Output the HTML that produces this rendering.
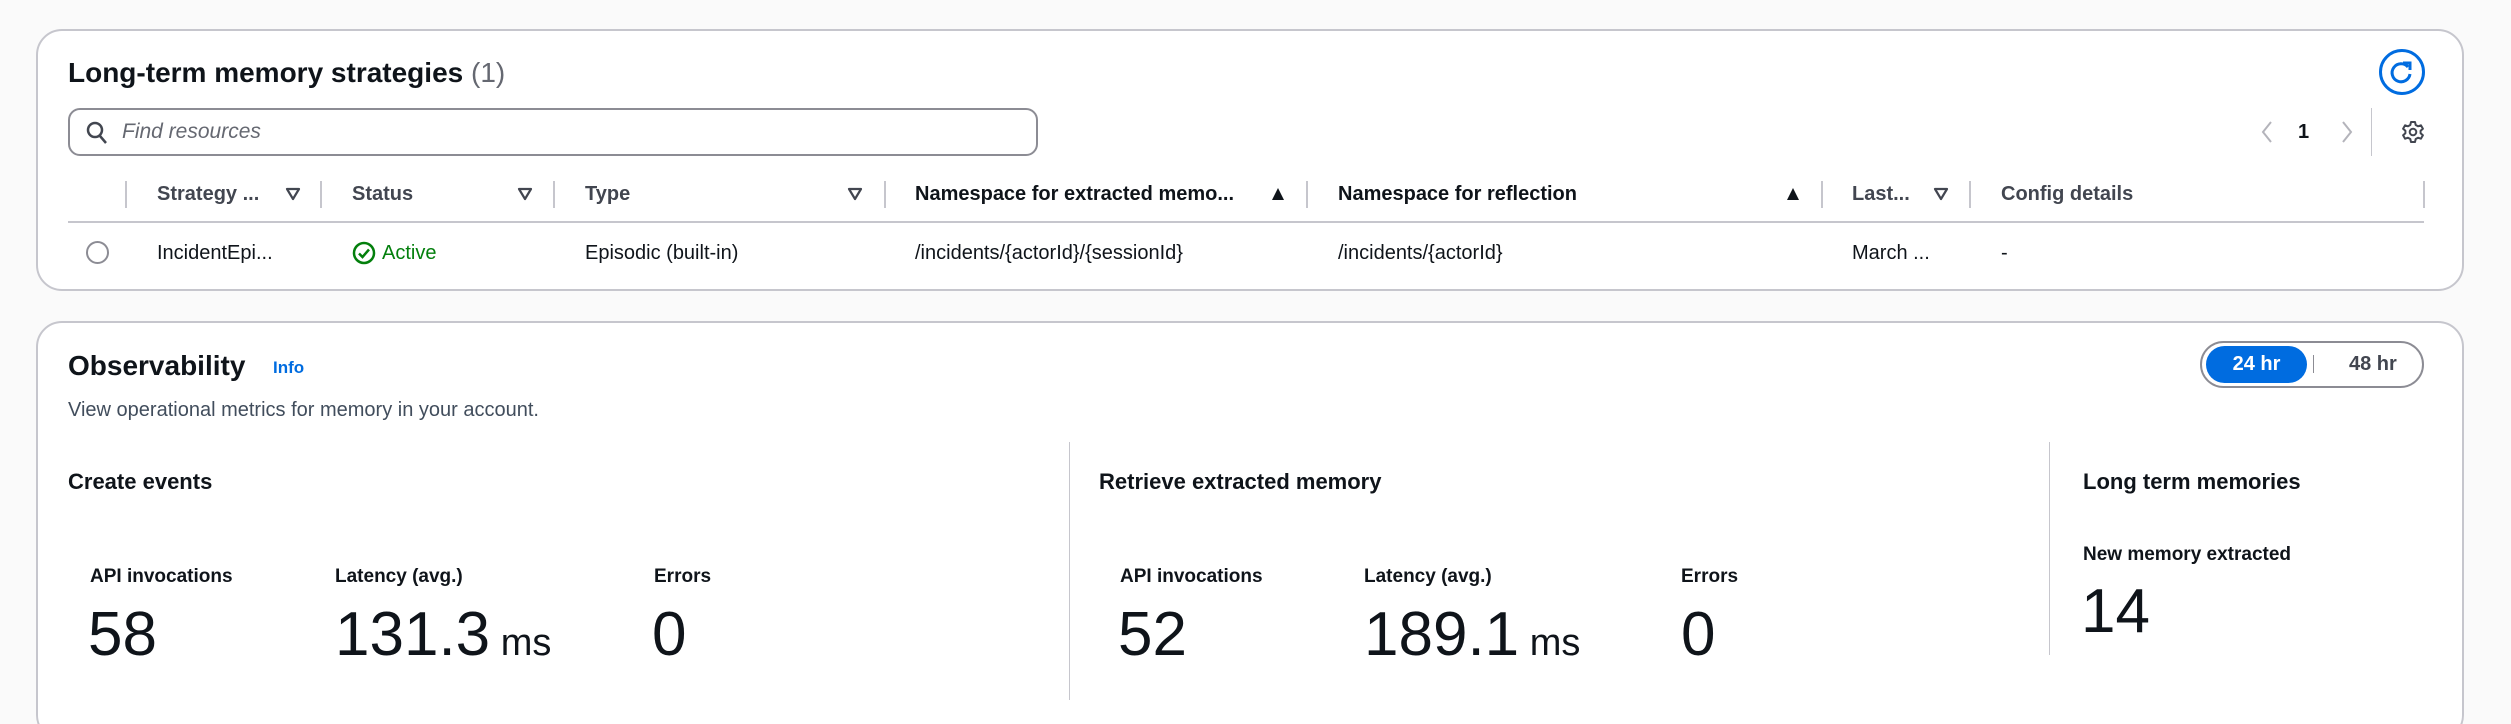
<!DOCTYPE html>
<html style="width:2511px;height:724px;overflow:hidden"><head><meta charset="utf-8"><style>
*{margin:0;padding:0;box-sizing:border-box}
body{width:2511px;height:724px;overflow:hidden;background:#fafafa;font-family:"Liberation Sans",sans-serif;color:#0f141a;position:relative}
.a{position:absolute;white-space:nowrap}
.card{position:absolute;background:#fff;border:2px solid #c6c6cd;border-radius:26px}
.h{font-size:20px;font-weight:bold;line-height:24px}
.sep{position:absolute;width:2px;background:#c6c6cd}
.td{font-size:20px;line-height:24px}
.big{font-size:62px;font-weight:300;line-height:70px;color:#0f141a}
.ml{font-size:19px;font-weight:bold;line-height:24px}
</style></head><body>

<div class="card" style="left:36px;top:29px;width:2428px;height:262px"></div>
<div class="a" style="left:68px;top:56px;font-size:28px;font-weight:bold;line-height:34px">Long-term memory strategies <span style="font-weight:normal;color:#656871">(1)</span></div>

<svg class="a" style="left:2378px;top:48px" width="48" height="48" viewBox="0 0 48 48"><circle cx="24" cy="24" r="21.5" fill="none" stroke="#006ce0" stroke-width="3"/><path d="M30 19 A9 9 0 1 0 32 26" fill="none" stroke="#006ce0" stroke-width="3"/><path d="M25 15 L32 15 L32 22" fill="none" stroke="#006ce0" stroke-width="3"/></svg>

<div class="a" style="left:68px;top:108px;width:970px;height:48px;border:2px solid #8c8c94;border-radius:12px"></div>
<svg class="a" style="left:86px;top:121px" width="22" height="24" viewBox="0 0 22 24"><circle cx="9" cy="9" r="7" fill="none" stroke="#424650" stroke-width="2.5"/><path d="M14 15 L20 22" stroke="#424650" stroke-width="2.5"/></svg>
<div class="a" style="left:122px;top:120px;font-size:21px;font-style:italic;color:#656871;line-height:24px">Find resources</div>

<svg class="a" style="left:2260px;top:120px" width="14" height="24" viewBox="0 0 14 24"><path d="M11 2 L3 12 L11 22" fill="none" stroke="#b4b4bb" stroke-width="2"/></svg>
<div class="a" style="left:2298px;top:120px;font-size:20px;font-weight:bold;line-height:24px">1</div>
<svg class="a" style="left:2340px;top:120px" width="14" height="24" viewBox="0 0 14 24"><path d="M3 2 L11 12 L3 22" fill="none" stroke="#b4b4bb" stroke-width="2"/></svg>
<div class="sep" style="left:2371px;top:108px;height:48px;width:1px"></div>
<svg class="a" style="left:2401px;top:120px" width="24" height="24" viewBox="0 0 24 24"><path d="M10 2h4l.7 3 2.3 1.3 2.9-1 2 3.4-2.3 2.1v2.4l2.3 2.1-2 3.4-2.9-1-2.3 1.3-.7 3h-4l-.7-3-2.3-1.3-2.9 1-2-3.4 2.3-2.1v-2.4L2.1 8.7l2-3.4 2.9 1L9.3 5z" fill="none" stroke="#424650" stroke-width="2" stroke-linejoin="round"/><circle cx="12" cy="12" r="3.3" fill="none" stroke="#424650" stroke-width="2"/></svg>

<div class="sep" style="left:125px;top:181px;height:27px"></div>
<div class="sep" style="left:320px;top:181px;height:27px"></div>
<div class="sep" style="left:553px;top:181px;height:27px"></div>
<div class="sep" style="left:884px;top:181px;height:27px"></div>
<div class="sep" style="left:1306px;top:181px;height:27px"></div>
<div class="sep" style="left:1821px;top:181px;height:27px"></div>
<div class="sep" style="left:1969px;top:181px;height:27px"></div>
<div class="sep" style="left:2423px;top:181px;height:27px"></div>

<div class="a h" style="left:157px;top:182px;color:#424650">Strategy ...</div>
<div class="a h" style="left:352px;top:182px;color:#424650">Status</div>
<div class="a h" style="left:585px;top:182px;color:#424650">Type</div>
<div class="a h" style="left:915px;top:182px">Namespace for extracted memo...</div>
<div class="a h" style="left:1338px;top:182px">Namespace for reflection</div>
<div class="a h" style="left:1852px;top:182px;color:#424650">Last...</div>
<div class="a h" style="left:2001px;top:182px;color:#424650">Config details</div>

<svg class="a" style="left:285px;top:186px" width="16" height="16" viewBox="0 0 16 16"><path d="M2 3 H14 L8 13 Z" fill="none" stroke="#424650" stroke-width="2.2" stroke-linejoin="round"/></svg>
<svg class="a" style="left:517px;top:186px" width="16" height="16" viewBox="0 0 16 16"><path d="M2 3 H14 L8 13 Z" fill="none" stroke="#424650" stroke-width="2.2" stroke-linejoin="round"/></svg>
<svg class="a" style="left:847px;top:186px" width="16" height="16" viewBox="0 0 16 16"><path d="M2 3 H14 L8 13 Z" fill="none" stroke="#424650" stroke-width="2.2" stroke-linejoin="round"/></svg>
<svg class="a" style="left:1933px;top:186px" width="16" height="16" viewBox="0 0 16 16"><path d="M2 3 H14 L8 13 Z" fill="none" stroke="#424650" stroke-width="2.2" stroke-linejoin="round"/></svg>
<svg class="a" style="left:1270px;top:186px" width="16" height="16" viewBox="0 0 16 16"><path d="M2 14 H14 L8 2 Z" fill="#0f141a"/></svg>
<svg class="a" style="left:1785px;top:186px" width="16" height="16" viewBox="0 0 16 16"><path d="M2 14 H14 L8 2 Z" fill="#0f141a"/></svg>

<div class="a" style="left:68px;top:221px;width:2356px;height:2px;background:#c6c6cd"></div>

<div class="a" style="left:86px;top:241px;width:23px;height:23px;border:2px solid #8c8c94;border-radius:50%"></div>
<div class="a td" style="left:157px;top:241px">IncidentEpi...</div>
<svg class="a" style="left:352px;top:241px" width="24" height="24" viewBox="0 0 24 24"><circle cx="12" cy="12" r="10" fill="none" stroke="#037f0c" stroke-width="2.5"/><path d="M7 12.5 L10.5 16 L17 8.5" fill="none" stroke="#037f0c" stroke-width="2.5"/></svg>
<div class="a td" style="left:382px;top:241px;color:#037f0c">Active</div>
<div class="a td" style="left:585px;top:241px">Episodic (built-in)</div>
<div class="a td" style="left:915px;top:241px">/incidents/{actorId}/{sessionId}</div>
<div class="a td" style="left:1338px;top:241px">/incidents/{actorId}</div>
<div class="a td" style="left:1852px;top:241px">March ...</div>
<div class="a td" style="left:2001px;top:241px">-</div>

<div class="card" style="left:36px;top:321px;width:2428px;height:420px;clip-path:inset(0 0 17px 0)"></div>
<div class="a" style="left:68px;top:349px;font-size:28px;font-weight:bold;line-height:34px">Observability</div>
<div class="a" style="left:273px;top:357px;font-size:17px;font-weight:bold;color:#006ce0;line-height:22px">Info</div>
<div class="a" style="left:68px;top:398px;font-size:20px;color:#414d5c;line-height:24px">View operational metrics for memory in your account.</div>

<div class="a" style="left:2200px;top:341px;width:224px;height:47px;border:2px solid #8c8c94;border-radius:24px"></div>
<div class="a" style="left:2206px;top:346px;width:101px;height:37px;background:#006ce0;border-radius:19px;color:#fff;font-size:20px;font-weight:bold;line-height:37px;text-align:center">24 hr</div>
<div class="a" style="left:2313px;top:355px;width:1px;height:18px;background:#8c8c94"></div>
<div class="a" style="left:2349px;top:352px;font-size:20px;font-weight:bold;color:#424650;line-height:24px">48 hr</div>

<div class="sep" style="left:1069px;top:442px;height:258px;width:1px"></div>
<div class="sep" style="left:2049px;top:442px;height:213px;width:1px"></div>

<div class="a" style="left:68px;top:468px;font-size:22px;font-weight:bold;line-height:28px">Create events</div>
<div class="a" style="left:1099px;top:468px;font-size:22px;font-weight:bold;line-height:28px">Retrieve extracted memory</div>
<div class="a" style="left:2083px;top:468px;font-size:22px;font-weight:bold;line-height:28px">Long term memories</div>

<div class="a ml" style="left:90px;top:565px">API invocations</div>
<div class="a ml" style="left:335px;top:565px">Latency (avg.)</div>
<div class="a ml" style="left:654px;top:565px">Errors</div>
<div class="a ml" style="left:1120px;top:565px">API invocations</div>
<div class="a ml" style="left:1364px;top:565px">Latency (avg.)</div>
<div class="a ml" style="left:1681px;top:565px">Errors</div>
<div class="a ml" style="left:2083px;top:543px">New memory extracted</div>

<div class="a big" style="left:88px;top:600px">58</div>
<div class="a big" style="left:335px;top:600px">131.3<span style="font-size:38px"> ms</span></div>
<div class="a big" style="left:652px;top:600px">0</div>
<div class="a big" style="left:1118px;top:600px">52</div>
<div class="a big" style="left:1364px;top:600px">189.1<span style="font-size:38px"> ms</span></div>
<div class="a big" style="left:1681px;top:600px">0</div>
<div class="a big" style="left:2081px;top:577px">14</div>
</body></html>
